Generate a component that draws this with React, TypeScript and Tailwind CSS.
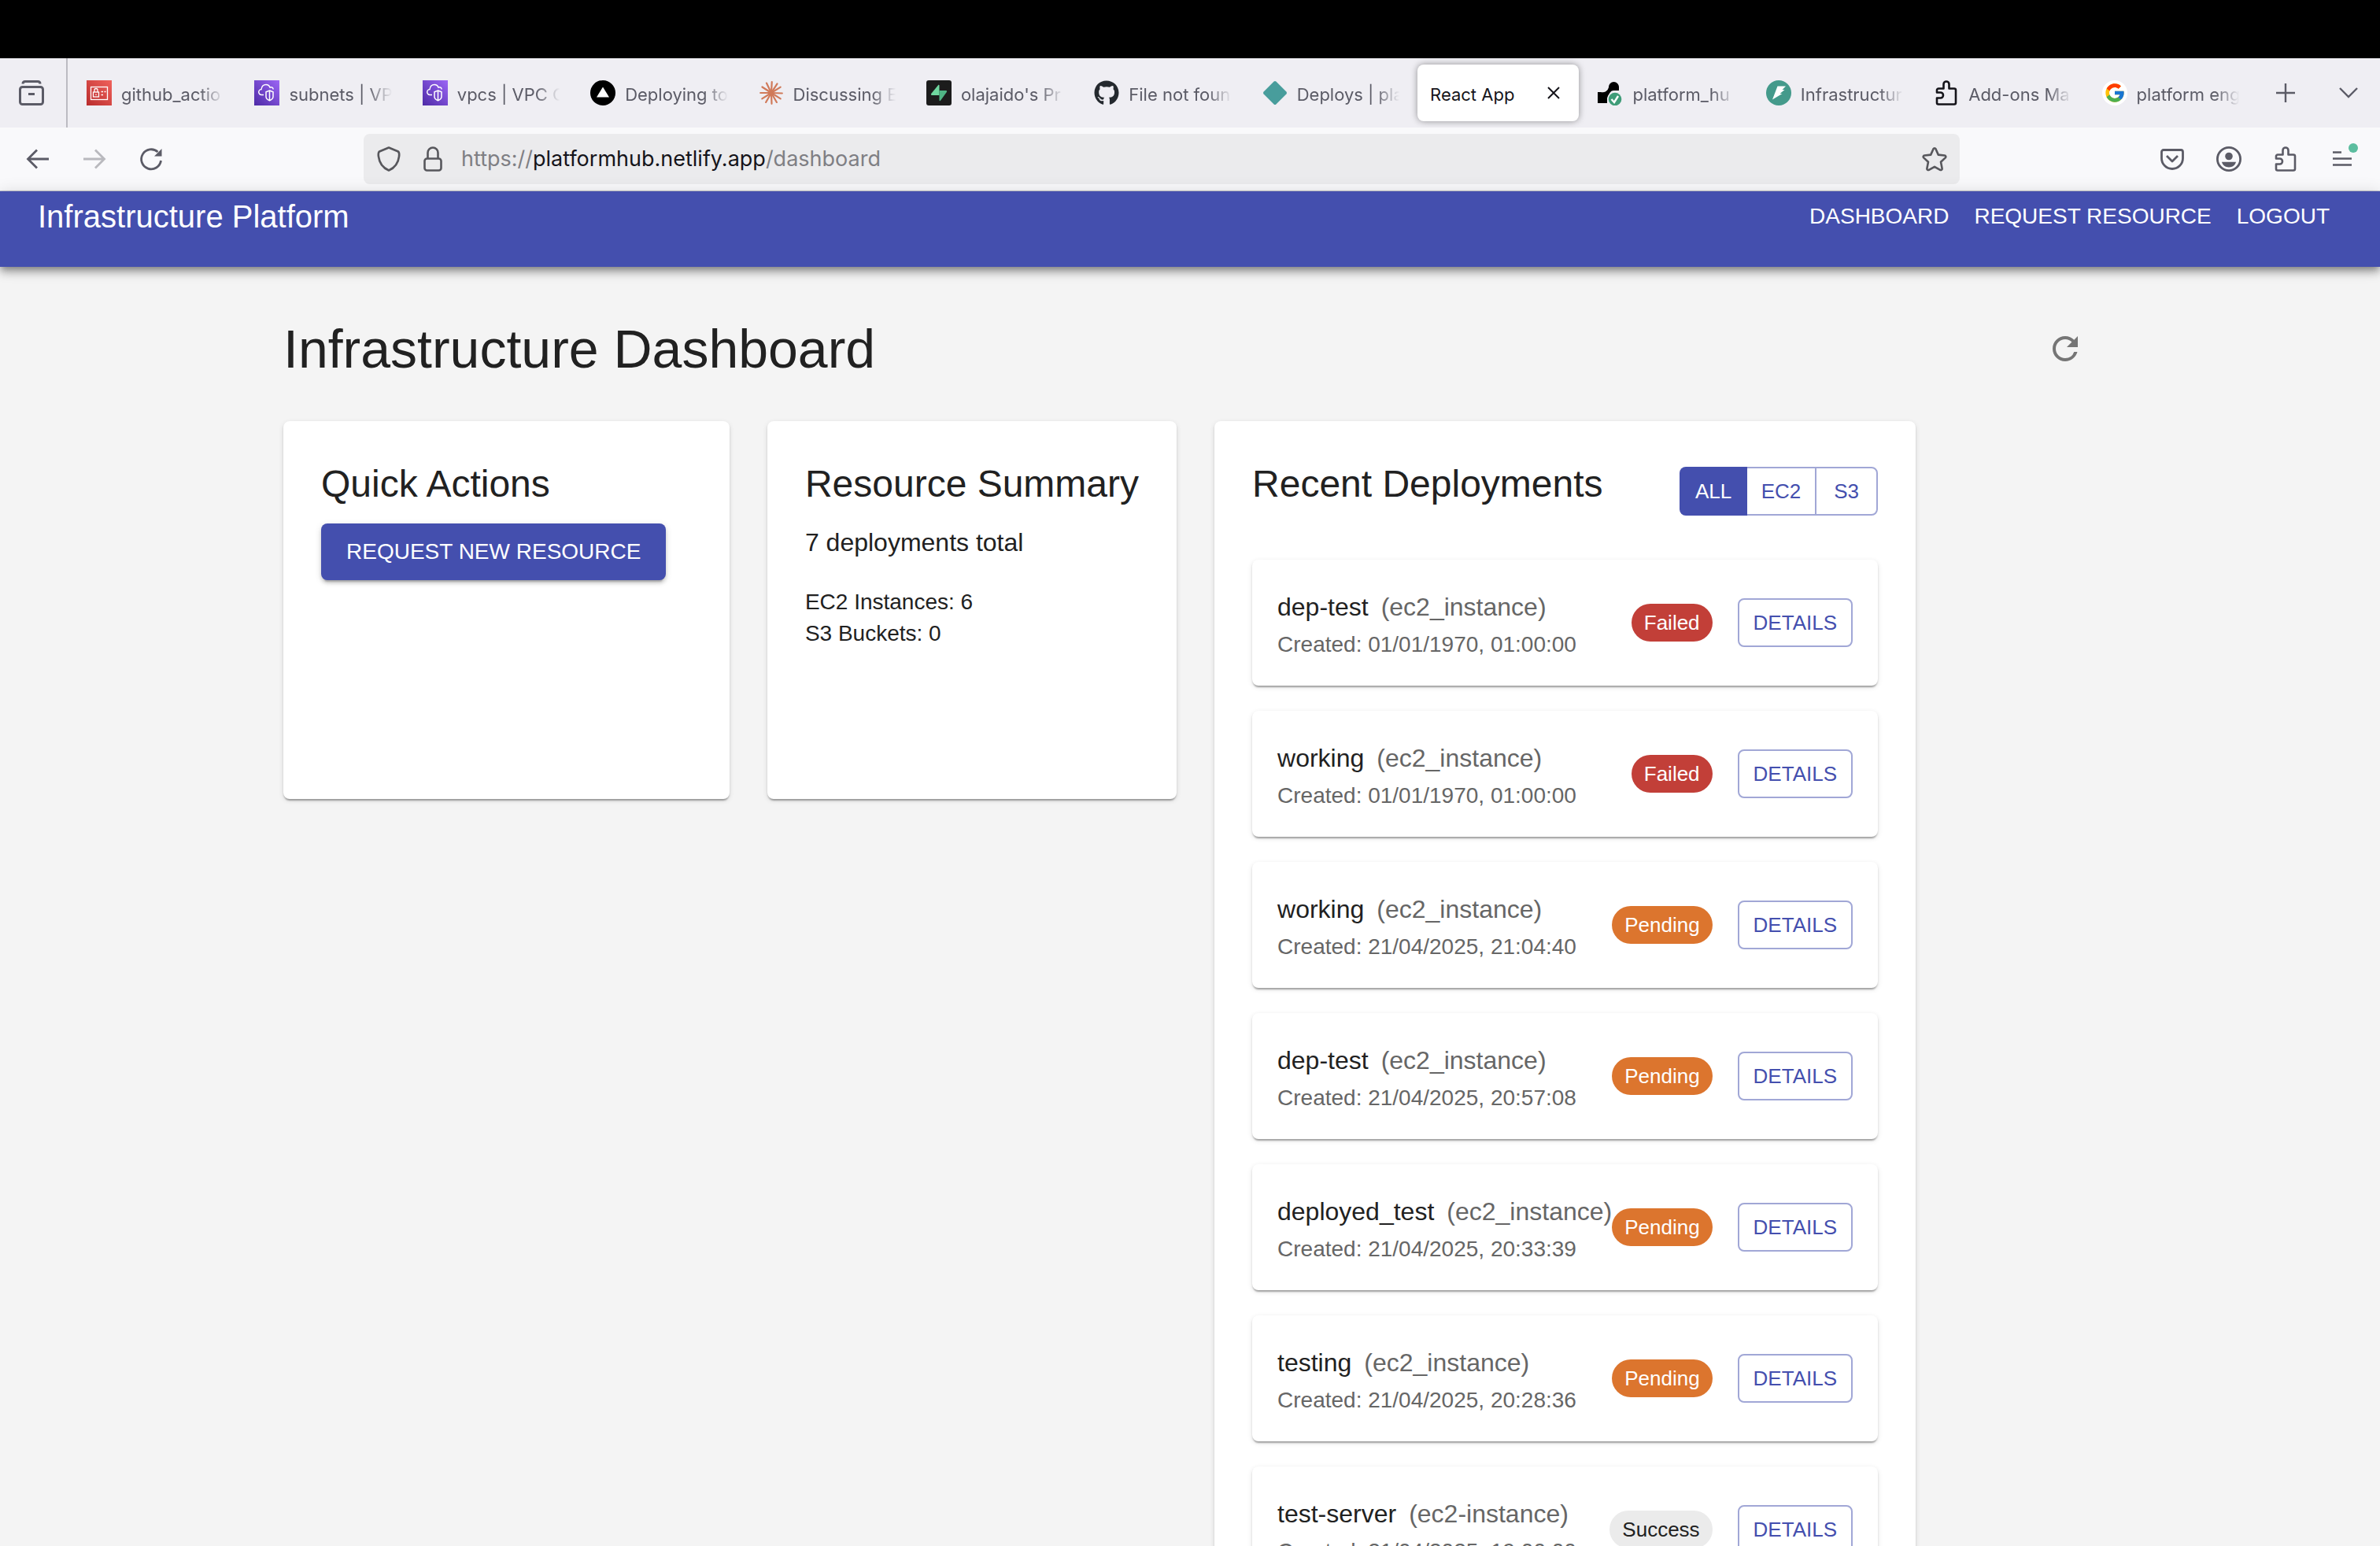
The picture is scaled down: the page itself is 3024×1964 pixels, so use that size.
import React from "react";
import { FaGithub } from "react-icons/fa";
import { FcGoogle } from "react-icons/fc";
import { MdRefresh } from "react-icons/md";

function IamIcon() {
  return (
    <svg viewBox="0 0 32 32" className="size-8">
      <defs>
        <linearGradient id="iam" x1="0" y1="1" x2="1" y2="0">
          <stop offset="0" stopColor="#b92c2c" />
          <stop offset="1" stopColor="#f0625c" />
        </linearGradient>
      </defs>
      <rect width="32" height="32" fill="url(#iam)" />
      <rect x="5.5" y="8.5" width="21" height="16" fill="none" stroke="#fff" strokeWidth="1.3" />
      <rect x="8.5" y="15" width="7" height="6" fill="none" stroke="#fff" strokeWidth="1.3" />
      <path d="M10 15v-2.500a2 2 0 0 1 4 0V15M12 17.500v1.500M18.500 14.500h2.500M22.500 14.500h2M18.500 18.500h2.500" fill="none" stroke="#fff" strokeWidth="1.3" />
    </svg>
  );
}

function VpcIcon() {
  return (
    <svg viewBox="0 0 32 32" className="size-8">
      <defs>
        <linearGradient id="vpc" x1="0" y1="1" x2="1" y2="0">
          <stop offset="0" stopColor="#4d2aa6" />
          <stop offset="1" stopColor="#9c66f5" />
        </linearGradient>
      </defs>
      <rect width="32" height="32" fill="url(#vpc)" />
      <path d="M12 18.500H9.500a3.500 3.500 0 0 1-.5-7C9.500 7.500 12 5.500 15 5.500c2.500 0 4.300 1.500 5 3.500 2.500-1 4 .5 4.200 2.500" fill="none" stroke="#fff" strokeWidth="1.5" />
      <path d="M19.500 13l4.500 1.800v6c0 2.500-2 4-4.500 5-2.500-1-4.500-2.500-4.500-5v-6zM19.500 13v12.500" fill="none" stroke="#fff" strokeWidth="1.5" />
    </svg>
  );
}

function TriangleIcon() {
  return (
    <svg viewBox="0 0 32 32" className="size-8">
      <circle cx="16" cy="16" r="16" fill="#000" />
      <path d="M16 8.500L24 21.500H8z" fill="#fff" />
    </svg>
  );
}

function BurstIcon() {
  const rays = [3, 33, 58, 92, 122, 150, 178, 210, 238, 270, 303, 334];
  return (
    <svg viewBox="0 0 32 32" className="size-8">
      {rays.map((a) => (
        <path key={a} d="M16 16.500L16 2.200" stroke="#d07a5a" strokeWidth="2.2" strokeLinecap="round" transform={`rotate(${a} 16 16)`} />
      ))}
    </svg>
  );
}

function BoltSquareIcon() {
  return (
    <svg viewBox="0 0 32 32" className="size-8">
      <rect width="32" height="32" rx="3" fill="#1c1c1c" />
      <path d="M16.500 6.500v12.500H7c-1 0-1.500-1-.8-1.900L15 6.200c.5-.6 1.500-.4 1.500.3z" fill="#6fd79f" />
      <path d="M16.500 25.500V13H25c1 0 1.500 1 .8 1.900L18 25.800c-.5.600-1.500.4-1.500-.3z" fill="#4fb585" />
    </svg>
  );
}

function DiamondIcon() {
  return (
    <svg viewBox="0 0 32 32" className="size-8">
      <path d="M14.600 1.600a2 2 0 0 1 2.800 0L30.400 14.600a2 2 0 0 1 0 2.800L17.400 30.400a2 2 0 0 1-2.800 0L1.600 17.400a2 2 0 0 1 0-2.800z" fill="#489d9c" />
    </svg>
  );
}

function DeployIcon() {
  return (
    <svg viewBox="0 0 32 32" className="size-8">
      <path d="M0 15h4a8 8 0 0 0 10-6C14 5 17 2 20.500 2S27 5 27 8.500V13H20c-3 0-5 3-6 6l-2 4v6H0z" fill="#000" />
      <circle cx="22" cy="24" r="10" fill="#efeef3" />
      <circle cx="22" cy="24" r="8.300" fill="#3f9c78" />
      <path d="M17.500 24l3.500 4 5-8" fill="none" stroke="#fff" strokeWidth="2.4" />
    </svg>
  );
}

function RoundBoltIcon() {
  return (
    <svg viewBox="0 0 32 32" className="size-8">
      <circle cx="16" cy="16" r="16" fill="#449a8b" />
      <path d="M14.500 7.500H25L20.500 12H23.500L17.500 17H20.500L8 24.500z" fill="#fff" />
    </svg>
  );
}

function PuzzleIcon() {
  return (
    <svg viewBox="0 0 32 32" className="size-8" fill="none" stroke="currentColor" strokeWidth="2.600" strokeLinejoin="round">
      <path d="M12.500 10.500V5a3.500 3.500 0 0 1 7 0V10.500H26a2 2 0 0 1 2 2V28.500a2 2 0 0 1-2 2H6a2 2 0 0 1-2-2V22.500H8.500a3.500 3.500 0 0 0 0-7H4V12.500a2 2 0 0 1 2-2z" />
    </svg>
  );
}

function GoogleIcon() {
  return (
    <span className="flex size-8 items-center justify-center rounded-full bg-white">
      <FcGoogle className="size-7" />
    </span>
  );
}

const tabs: { title: string; icon?: React.ReactNode; active?: boolean }[] = [
  { title: "github_actio", icon: <IamIcon /> },
  { title: "subnets | VP", icon: <VpcIcon /> },
  { title: "vpcs | VPC C", icon: <VpcIcon /> },
  { title: "Deploying to", icon: <TriangleIcon /> },
  { title: "Discussing E", icon: <BurstIcon /> },
  { title: "olajaido's Pr", icon: <BoltSquareIcon /> },
  { title: "File not foun", icon: <FaGithub className="size-8 text-[#24292e]" /> },
  { title: "Deploys | pla", icon: <DiamondIcon /> },
  { title: "React App", active: true },
  { title: "platform_hu", icon: <DeployIcon /> },
  { title: "Infrastructur", icon: <RoundBoltIcon /> },
  { title: "Add-ons Ma", icon: <span className="text-[#15141a]"><PuzzleIcon /></span> },
  { title: "platform eng", icon: <GoogleIcon /> },
];

function TabStrip() {
  return (
    <div className="flex h-[88px] items-stretch bg-[#efeef3] text-[#5b5b66]">
      <button aria-label="View recent browsing" className="flex w-[86px] items-center justify-center border-r-2 border-[#bcbbc2] pr-1">
        <svg viewBox="0 0 32 32" className="size-8" fill="none" stroke="currentColor" strokeWidth="3">
          <path d="M5 4.500C5 2.500 6 1.500 8 1.500H24C26 1.500 27 2.500 27 4.500" />
          <rect x="1.500" y="8.500" width="29" height="22" rx="3" />
          <path d="M12 17.500h8" />
        </svg>
      </button>
      <div role="tablist" className="grid min-w-0 flex-1 grid-cols-13 pl-1">
        {tabs.map((t) => (
          <button
            key={t.title}
            role="tab"
            aria-selected={!!t.active}
            className={
              t.active
                ? "mx-1 my-2 flex min-w-0 items-center justify-between rounded-lg bg-white px-4 text-[22px] text-[#15141a] shadow-[0_0_8px_rgba(0,0,0,0.4)]"
                : "mx-1 my-2 flex min-w-0 items-center gap-3 pr-3 pl-4 text-[22px]"
            }
          >
            {t.icon && <span className="shrink-0">{t.icon}</span>}
            <span
              className={
                t.active
                  ? "pt-1 whitespace-nowrap"
                  : "min-w-0 flex-1 overflow-hidden pt-1 text-left whitespace-nowrap [mask-image:linear-gradient(to_right,black_75%,transparent_98%)]"
              }
            >
              {t.title}
            </span>
            {t.active && (
              <svg viewBox="0 0 16 16" className="mr-2 size-4" stroke="currentColor" strokeWidth="2">
                <path d="M1 1l14 14M15 1L1 15" />
              </svg>
            )}
          </button>
        ))}
      </div>
      <button aria-label="New tab" className="flex w-20 items-center justify-center">
        <svg viewBox="0 0 24 24" className="size-6" stroke="currentColor" strokeWidth="2.4">
          <path d="M12 0v24M0 12h24" />
        </svg>
      </button>
      <button aria-label="List all tabs" className="flex w-20 items-center justify-center">
        <svg viewBox="0 0 24 14" className="w-6" fill="none" stroke="currentColor" strokeWidth="2.4">
          <path d="M1 1l11 11L23 1" />
        </svg>
      </button>
    </div>
  );
}

function NavBar() {
  return (
    <div className="grid h-[81px] grid-cols-[462fr_2028fr_534fr] items-center border-b border-[#c9c9cf] bg-[#f9f9fb] text-[#5b5b66]">
      <div className="flex items-center gap-10 pl-8">
        <button aria-label="Back">
          <svg viewBox="0 0 32 32" className="size-8" fill="none" stroke="currentColor" strokeWidth="2.800">
            <path d="M30 16H4M15 4.500L3.500 16L15 27.500" />
          </svg>
        </button>
        <button aria-label="Forward" className="text-[#b9b9be]">
          <svg viewBox="0 0 32 32" className="size-8" fill="none" stroke="currentColor" strokeWidth="2.800">
            <path d="M2 16H28M17 4.500L28.500 16L17 27.500" />
          </svg>
        </button>
        <button aria-label="Reload">
          <svg viewBox="0 0 32 32" className="size-8" fill="none" stroke="currentColor" strokeWidth="2.800">
            <path d="M28.500 18A12.500 12.500 0 1 1 24.500 7" />
            <path d="M29.500 3v9.500H20z" fill="currentColor" stroke="none" />
          </svg>
        </button>
      </div>
      <div className="flex h-16 items-center rounded-lg bg-[#ebebed] px-4 text-[#57575c]">
        <button aria-label="Tracking protection">
          <svg viewBox="0 0 32 32" className="size-8" fill="none" stroke="currentColor" strokeWidth="2.600" strokeLinejoin="round">
            <path d="M16 1.500L28 6.500C29.500 8 29.500 10 29 13C28 21 24 27 16 30.500C8 27 4 21 3 13C2.500 10 2.500 8 4 6.500z" />
          </svg>
        </button>
        <button aria-label="Site information" className="ml-6">
          <svg viewBox="0 0 32 32" className="size-8" fill="none" stroke="currentColor" strokeWidth="2.600">
            <rect x="5.500" y="15.500" width="21" height="15" rx="3" />
            <path d="M9.500 15.500V8a6.500 6.500 0 0 1 13 0V15.500" />
          </svg>
        </button>
        <div role="textbox" aria-label="Address" contentEditable suppressContentEditableWarning className="ml-5 flex-1 text-[27px] whitespace-nowrap text-[#7f7f84] outline-none">
          https://<span className="text-[#15141a]">platformhub.netlify.app</span>/dashboard
        </div>
        <button aria-label="Bookmark this page">
          <svg viewBox="0 0 32 32" className="size-8" fill="none" stroke="currentColor" strokeWidth="2.600" strokeLinejoin="round">
            <path d="M14.500 3.200a1.700 1.700 0 0 1 3 0L20.800 10.600L28.800 11.500a1.700 1.700 0 0 1 1 2.900L24 19.800L25.600 28a1.700 1.700 0 0 1-2.500 1.800L16 25.800L8.900 29.800A1.700 1.700 0 0 1 6.400 28L8 19.800L2.200 14.400a1.700 1.700 0 0 1 1-2.900L11.200 10.600z" />
          </svg>
        </button>
      </div>
      <div className="flex items-center justify-end gap-10 pr-8">
        <button aria-label="Save to Pocket">
          <svg viewBox="0 0 32 32" className="size-8" fill="none" stroke="currentColor" strokeWidth="2.800" strokeLinejoin="round">
            <path d="M5 4.500H27A2.500 2.500 0 0 1 29.500 7V15A13.500 13.500 0 0 1 2.500 15V7A2.500 2.500 0 0 1 5 4.500z" />
            <path d="M9 12l7 7 7-7" />
          </svg>
        </button>
        <button aria-label="Account">
          <svg viewBox="0 0 32 32" className="size-8">
            <circle cx="16" cy="16" r="14.600" fill="none" stroke="currentColor" strokeWidth="2.800" />
            <circle cx="16" cy="12.500" r="4.800" fill="currentColor" />
            <path d="M7 19.800H25C24 24 20.500 26.500 16 26.500S8 24 7 19.800z" fill="currentColor" />
          </svg>
        </button>
        <button aria-label="Extensions">
          <PuzzleIcon />
        </button>
        <button aria-label="Open application menu" className="relative">
          <svg viewBox="0 0 32 32" className="size-8" stroke="currentColor" strokeWidth="2.600">
            <path d="M4 7.500h11M4 15.500h24M4 23.500h24" />
          </svg>
          <span className="absolute -top-1 -right-1 size-3 rounded-full bg-[#5cbd9f]" />
        </button>
      </div>
    </div>
  );
}

const cardShadow =
  "shadow-[0_4px_2px_-2px_rgba(0,0,0,0.2),0_2px_2px_0_rgba(0,0,0,0.14),0_2px_6px_0_rgba(0,0,0,0.12)]";

type Status = "Failed" | "Pending" | "Success";

const statusClass: Record<Status, string> = {
  Failed: "bg-[#c23f38] text-white",
  Pending: "bg-[#dc752e] text-white",
  Success: "bg-[#ebebeb] text-[#212121]",
};

const deployments: { name: string; type: string; created: string; status: Status }[] = [
  { name: "dep-test", type: "ec2_instance", created: "01/01/1970, 01:00:00", status: "Failed" },
  { name: "working", type: "ec2_instance", created: "01/01/1970, 01:00:00", status: "Failed" },
  { name: "working", type: "ec2_instance", created: "21/04/2025, 21:04:40", status: "Pending" },
  { name: "dep-test", type: "ec2_instance", created: "21/04/2025, 20:57:08", status: "Pending" },
  { name: "deployed_test", type: "ec2_instance", created: "21/04/2025, 20:33:39", status: "Pending" },
  { name: "testing", type: "ec2_instance", created: "21/04/2025, 20:28:36", status: "Pending" },
  { name: "test-server", type: "ec2-instance", created: "21/04/2025, 19:00:00", status: "Success" },
];

function DeploymentRow({ d }: { d: (typeof deployments)[number] }) {
  return (
    <li className={`flex h-40 items-center justify-between rounded-lg bg-white px-8 ${cardShadow}`}>
      <div className="min-w-0 pt-2 whitespace-nowrap">
        <div className="flex gap-4 text-[32px] leading-[48px]">
          <span>{d.name}</span>
          <span className="text-[#666666]">({d.type})</span>
        </div>
        <div className="text-[28px] leading-[48px] text-[#666666]">Created: {d.created}</div>
      </div>
      <div className="flex shrink-0 items-center gap-8">
        <span className={`rounded-full px-4 text-[26px] leading-[48px] ${statusClass[d.status]}`}>{d.status}</span>
        <button className="h-[62px] rounded-lg border-2 border-[#a1a7d6] px-[18px] text-[26px] text-[#444fae]">DETAILS</button>
      </div>
    </li>
  );
}

export default function App() {
  return (
    <div className="flex h-screen flex-col overflow-hidden bg-[#f4f4f4] font-['Liberation_Sans',Arial,sans-serif] text-[#212121]">
      <div className="h-[74px] shrink-0 bg-black" />
      <div className="shrink-0 font-[Inter,sans-serif]">
        <TabStrip />
        <NavBar />
      </div>

      <header className="z-10 flex h-24 shrink-0 items-start justify-between bg-[#444fae] pr-16 pl-12 text-white shadow-[0_4px_8px_-2px_rgba(0,0,0,0.3),0_8px_10px_0_rgba(0,0,0,0.2),0_2px_20px_0_rgba(0,0,0,0.14)]">
        <div className="text-[40px] leading-[64px]">Infrastructure Platform</div>
        <nav className="flex gap-8 text-[28px] leading-[64px]">
          <a href="#dashboard">DASHBOARD</a>
          <a href="#request">REQUEST RESOURCE</a>
          <a href="#logout">LOGOUT</a>
        </nav>
      </header>

      <main className="min-h-0 flex-1 overflow-hidden px-12">
        <div className="mx-auto max-w-[2304px] pt-16">
          <div className="flex items-center justify-between">
            <h1 className="text-[68px] leading-[80px]">Infrastructure Dashboard</h1>
            <button aria-label="Refresh" className="p-4 text-[#757575]">
              <MdRefresh className="size-12" />
            </button>
          </div>

          <div className="mt-[52px] grid grid-cols-[567fr_520fr_891fr_182fr] items-start gap-12">
            <section className={`min-h-[480px] rounded-lg bg-white p-12 ${cardShadow}`}>
              <h2 className="text-5xl leading-[64px]">Quick Actions</h2>
              <button className="mt-[18px] h-[72px] rounded-lg bg-[#444fae] px-8 text-[28px] text-white shadow-[0_6px_2px_-4px_rgba(0,0,0,0.2),0_4px_4px_0_rgba(0,0,0,0.14),0_2px_10px_0_rgba(0,0,0,0.12)]">
                REQUEST NEW RESOURCE
              </button>
            </section>

            <section className={`min-h-[480px] rounded-lg bg-white p-12 ${cardShadow}`}>
              <h2 className="text-5xl leading-[64px] whitespace-nowrap">Resource Summary</h2>
              <p className="mt-[18px] text-[32px] leading-[48px]">7 deployments total</p>
              <p className="mt-8 text-[28px] leading-10">EC2 Instances: 6</p>
              <p className="text-[28px] leading-10">S3 Buckets: 0</p>
            </section>

            <section className={`rounded-lg bg-white p-12 ${cardShadow}`}>
              <div className="flex justify-between">
                <h2 className="text-5xl leading-[64px]">Recent Deployments</h2>
                <div className="mt-[10px] flex h-[62px] text-[26px] text-[#444fae]">
                  <button className="w-[86px] rounded-l-lg bg-[#444fae] text-white">ALL</button>
                  <button className="w-[86px] border-y-2 border-[#a1a7d6]">EC2</button>
                  <button className="w-20 rounded-r-lg border-2 border-[#a1a7d6]">S3</button>
                </div>
              </div>
              <ul className="mt-14 flex flex-col gap-8">
                {deployments.map((d, i) => (
                  <DeploymentRow key={i} d={d} />
                ))}
              </ul>
            </section>
          </div>
        </div>
      </main>
    </div>
  );
}
